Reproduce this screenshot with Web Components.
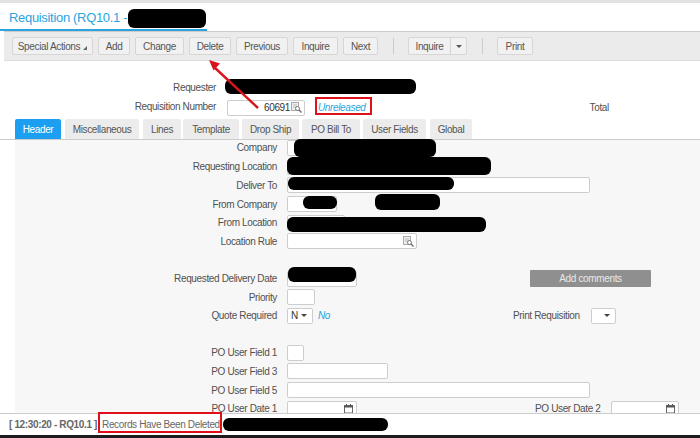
<!DOCTYPE html>
<html>
<head>
<meta charset="utf-8">
<title>Requisition</title>
<style>
html, body { margin: 0; padding: 0; background: #fff; }
body { font: 10px "Liberation Sans", Arial, sans-serif; letter-spacing: -0.36px; color: #505050; }
</style>
</head>
<body>
<req-page>
  <req-title>Requisition (RQ10.1 -</req-title>
  <req-toolbar>
    <tool-btn menu style="width:81px">Special Actions</tool-btn>
    <tool-btn style="width:32px">Add</tool-btn>
    <tool-btn style="width:49px">Change</tool-btn>
    <tool-btn style="width:42px">Delete</tool-btn>
    <tool-btn style="width:52px">Previous</tool-btn>
    <tool-btn style="width:45px">Inquire</tool-btn>
    <tool-btn style="width:35px">Next</tool-btn>
    <tool-sep></tool-sep>
    <tool-btn split style="width:59px">Inquire</tool-btn>
    <tool-sep></tool-sep>
    <tool-btn style="width:36px">Print</tool-btn>
  </req-toolbar>
  <req-head>
    <head-row label="Requester"></head-row>
    <head-row label="Requisition Number">
      <text-field search style="width:78px;margin-left:1px" align="right">60691</text-field>
      <span style="margin-left:13px;font-style:italic;color:#2aa3dc">Unreleased</span>
      <span style="margin-left:224px">Total</span>
    </head-row>
  </req-head>
  <req-tabs>
    <tab-item active style="width:46px">Header</tab-item>
    <tab-item style="width:74px">Miscellaneous</tab-item>
    <tab-item style="width:38px">Lines</tab-item>
    <tab-item style="width:56px;margin-left:-2px">Template</tab-item>
    <tab-item style="width:57px;margin-left:-1px">Drop Ship</tab-item>
    <tab-item style="width:58px;margin-left:-1px">PO Bill To</tab-item>
    <tab-item style="width:63px;margin-left:-1px">User Fields</tab-item>
    <tab-item style="width:42px">Global</tab-item>
  </req-tabs>
  <req-form>
    <form-row label="Company"><text-field style="width:20px"></text-field></form-row>
    <form-row label="Requesting Location"><text-field style="width:200px"></text-field></form-row>
    <form-row label="Deliver To"><text-field style="width:303px"></text-field></form-row>
    <form-row label="From Company"><text-field style="width:50px"></text-field></form-row>
    <form-row label="From Location"><text-field style="width:58px"></text-field></form-row>
    <form-row label="Location Rule"><text-field search style="width:130px"></text-field></form-row>
    <form-row></form-row>
    <form-row label="Requested Delivery Date">
      <text-field style="width:70px"></text-field>
      <grey-btn slot="right" style="margin-left:17px">Add comments</grey-btn>
    </form-row>
    <form-row label="Priority"><text-field style="width:28px"></text-field></form-row>
    <form-row label="Quote Required">
      <select-box style="width:26px">N</select-box>
      <span style="margin-left:5px;font-style:italic;color:#2aa3dc">No</span>
      <span slot="right" style="display:flex;align-items:center">Print Requisition<select-box style="width:25px;margin-left:11px"></select-box></span>
    </form-row>
    <form-row></form-row>
    <form-row label="PO User Field 1"><text-field style="width:17px"></text-field></form-row>
    <form-row label="PO User Field 3"><text-field style="width:101px"></text-field></form-row>
    <form-row label="PO User Field 5"><text-field style="width:303px"></text-field></form-row>
    <form-row label="PO User Date 1">
      <text-field date style="width:70px"></text-field>
      <span slot="right" style="display:flex;align-items:center;margin-left:22px">PO User Date 2<text-field date style="width:68px;margin-left:10px"></text-field></span>
    </form-row>
  </req-form>
  <req-status>
    <b>[ 12:30:20 - RQ10.1 ]</b>
    <span style="margin-left:5px">Records Have Been Deleted</span>
  </req-status>

  <!-- black redactions and red annotations sit over the screenshot -->
  <black-out x="128" y="9" w="78" h="19"></black-out>
  <black-out x="225" y="79" w="191" h="15"></black-out>
  <black-out x="294" y="139" w="142" h="18"></black-out>
  <black-out x="287" y="157" w="204" h="18"></black-out>
  <black-out x="288" y="177" w="166" h="13"></black-out>
  <black-out x="303" y="196" w="34" h="13"></black-out>
  <black-out x="375" y="194" w="65" h="16"></black-out>
  <black-out x="287" y="217" w="199" h="15"></black-out>
  <black-out x="288" y="267" w="68" h="15"></black-out>
  <black-out x="223" y="418" w="165" h="13"></black-out>
  <red-box x="315" y="97" w="57" h="18"></red-box>
  <red-box x="98" y="412" w="124" h="21"></red-box>
  <red-arrow></red-arrow>
</req-page>

<script>
const SEARCH = `<svg width="11" height="11" viewBox="0 0 11 11"><rect x="0.5" y="0.5" width="7" height="8" fill="#eee" stroke="#aaa"/><path d="M2 3h4M2 5h3" stroke="#bbb"/><circle cx="6.5" cy="6.5" r="2" fill="#fff" stroke="#777"/><path d="M8 8l2.5 2.5" stroke="#666" stroke-width="1.3"/></svg>`
const CALENDAR = `<svg width="11" height="11" viewBox="0 0 11 11"><rect x="1.500" y="2.500" width="8" height="7.500" fill="#fff" stroke="#666"/><path d="M1 3h9v1.500H1z" fill="#555"/><path d="M3.500 1v2M7.500 1v2" stroke="#555"/></svg>`

class Base extends HTMLElement {
    connectedCallback() {
        if (this.shadowRoot) return
        this.attachShadow({ mode: 'open' }).innerHTML = this.render()
    }
}

class ReqPage extends Base {
    render() {
        return `<style>
        :host { display: flex; flex-direction: column; position: relative; width: 700px; height: 438px; overflow: hidden; background: #fff; border-top: 3px solid #e2e2e2; box-sizing: border-box; border-bottom: 3px solid #1c1c1c; }
        </style><slot></slot>`
    }
}

class ReqTitle extends Base {
    render() {
        return `<style>
        :host { display: block; height: 28px; box-sizing: border-box; }
        div { width: 207px; height: 28px; box-sizing: border-box; padding: 6px 0 0 9px; font-size: 13px; letter-spacing: -0.32px; line-height: 18px; color: #2aa3e0; border-bottom: 2px solid #2aa3e0; white-space: nowrap; }
        </style><div><slot></slot></div>`
    }
}

class ReqToolbar extends Base {
    render() {
        return `<style>
        :host { display: flex; align-items: center; gap: 5px; height: 28px; margin-left: 4px; padding-left: 8px; background: #ebebeb; border-top: 1px solid #ccc; border-bottom: 1px solid #ddd; flex: none; }
        </style><slot></slot>`
    }
}

class ToolBtn extends Base {
    render() {
        const menu = this.hasAttribute('menu') ? `<i class="menu"></i>` : ''
        const split = this.hasAttribute('split') ? `<span class="split"><i></i></span>` : ''
        return `<style>
        :host { display: flex; height: 18px; box-sizing: border-box; background: #f1f1f1; border: 1px solid #d6d6d6; border-radius: 2px; color: #555; flex: none; }
        .t { flex: 1; display: flex; align-items: center; justify-content: center; white-space: nowrap; }
        .menu { border-style: solid; border-width: 0 0 4px 4px; border-color: transparent transparent #666 transparent; margin: 4px 0 0 3px; }
        .split { width: 15px; border-left: 1px solid #d6d6d6; display: flex; align-items: center; justify-content: center; flex: none; }
        .split i { border-style: solid; border-width: 3px 3px 0; border-color: #555 transparent transparent; }
        </style><span class="t"><slot></slot>${menu}</span>${split}`
    }
}

class ToolSep extends Base {
    render() {
        return `<style>
        :host { display: block; width: 1px; height: 16px; background: #ccc; margin: 0 9px 0 10px; flex: none; }
        </style>`
    }
}

class ReqHead extends Base {
    render() {
        return `<style>
        :host { display: flex; flex-direction: column; gap: 4px; height: 58px; box-sizing: border-box; padding-top: 20px; flex: none; }
        </style><slot></slot>`
    }
}

class HeadRow extends Base {
    render() {
        return `<style>
        :host { display: flex; align-items: center; height: 15px; white-space: nowrap; }
        .l { width: 216px; margin: 0 10px 2px 0; text-align: right; flex: none; }
        </style><span class="l">${this.getAttribute('label')}</span><slot></slot>`
    }
}

class TextField extends Base {
    render() {
        const ico = this.hasAttribute('search') ? SEARCH : this.hasAttribute('date') ? CALENDAR : ''
        const align = this.getAttribute('align') === 'right' ? 'flex-end' : 'flex-start'
        return `<style>
        :host { display: flex; align-items: center; height: 16px; box-sizing: border-box; background: #fff; border: 1px solid #cdcdcd; border-radius: 2px; padding: 0 2px; color: #333; flex: none; }
        .v { flex: 1; display: flex; justify-content: ${align}; padding-right: 1px; }
        svg { flex: none; }
        </style><span class="v"><slot></slot></span>${ico}`
    }
}

class SelectBox extends Base {
    render() {
        return `<style>
        :host { display: flex; align-items: center; justify-content: space-between; height: 16px; box-sizing: border-box; background: #fff; border: 1px solid #cdcdcd; border-radius: 2px; padding: 0 5px 0 3px; color: #333; flex: none; }
        i { border-style: solid; border-width: 3px 3px 0; border-color: #444 transparent transparent; margin-left: auto; }
        </style><span><slot></slot></span><i></i>`
    }
}

class ReqTabs extends Base {
    render() {
        return `<style>
        :host { display: flex; gap: 4px; height: 20px; padding-left: 15px; border-bottom: 1px solid #ccc; flex: none; }
        </style><slot></slot>`
    }
}

class TabItem extends Base {
    render() {
        return `<style>
        :host { display: flex; align-items: center; justify-content: center; box-sizing: border-box; height: 20px; background: #ececec; color: #555; border-radius: 2px 2px 0 0; white-space: nowrap; flex: none; }
        :host([active]) { background: #1c9ff0; color: #fff; }
        </style><slot></slot>`
    }
}

class ReqForm extends Base {
    render() {
        return `<style>
        :host { display: grid; grid-auto-rows: 18.6px; flex: 1; min-height: 0; overflow: hidden; margin-left: 15px; background: #f7f7f7; }
        ::slotted(form-row:first-child) { margin-top: -1.5px; }
        </style><slot></slot>`
    }
}

class FormRow extends Base {
    render() {
        return `<style>
        :host { display: grid; grid-template-columns: 262px 236px 187px; align-items: center; white-space: nowrap; }
        .l { text-align: right; margin-bottom: 2px; }
        .f { display: flex; align-items: center; margin: 0 0 2px 10px; }
        .r { display: block; margin-bottom: 2px; }
        </style><span class="l">${this.getAttribute('label') || ''}</span><span class="f"><slot></slot></span><span class="r"><slot name="right"></slot></span>`
    }
}

class GreyBtn extends Base {
    render() {
        return `<style>
        :host { display: flex; align-items: center; justify-content: center; width: 121px; height: 17px; background: #8f8f8f; color: #e8e8e8; border-radius: 1px; }
        </style><slot></slot>`
    }
}

class ReqStatus extends Base {
    render() {
        return `<style>
        :host { display: flex; align-items: center; height: 22px; box-sizing: border-box; padding-left: 9px; background: #fff; border-top: 1px solid #ccc; color: #666; white-space: nowrap; flex: none; }
        </style><slot></slot>`
    }
}

class Overlay extends HTMLElement {
    box() {
        const a = n => this.getAttribute(n)
        // y is given in page coordinates, the host starts below the 3px top strip
        return `left:${a('x')}px;top:${a('y') - 3}px;width:${a('w')}px;height:${a('h')}px;`
    }
}

class BlackOut extends Overlay {
    connectedCallback() {
        this.attachShadow({ mode: 'open' }).innerHTML = `<style>
        :host { display: block; position: absolute; ${this.box()} background: #000; border-radius: 6px; }
        </style>`
    }
}

class RedBox extends Overlay {
    connectedCallback() {
        this.attachShadow({ mode: 'open' }).innerHTML = `<style>
        :host { display: block; position: absolute; ${this.box()} box-sizing: border-box; border: 2px solid #e0101a; }
        </style>`
    }
}

class RedArrow extends HTMLElement {
    connectedCallback() {
        this.attachShadow({ mode: 'open' }).innerHTML = `<style>
        :host { display: block; position: absolute; left: 200px; top: 52px; width: 70px; height: 60px; }
        </style><svg width="70" height="60" viewBox="0 0 70 60">
        <path d="M58 53L14 12" stroke="#d8141c" stroke-width="2.4"/>
        <path d="M9 5l11 3.500-6.500 7z" fill="#d8141c"/>
        </svg>`
    }
}

customElements.define('req-page', ReqPage)
customElements.define('req-title', ReqTitle)
customElements.define('req-toolbar', ReqToolbar)
customElements.define('tool-btn', ToolBtn)
customElements.define('tool-sep', ToolSep)
customElements.define('req-head', ReqHead)
customElements.define('head-row', HeadRow)
customElements.define('text-field', TextField)
customElements.define('select-box', SelectBox)
customElements.define('req-tabs', ReqTabs)
customElements.define('tab-item', TabItem)
customElements.define('req-form', ReqForm)
customElements.define('form-row', FormRow)
customElements.define('grey-btn', GreyBtn)
customElements.define('req-status', ReqStatus)
customElements.define('black-out', BlackOut)
customElements.define('red-box', RedBox)
customElements.define('red-arrow', RedArrow)
</script>
</body>
</html>
